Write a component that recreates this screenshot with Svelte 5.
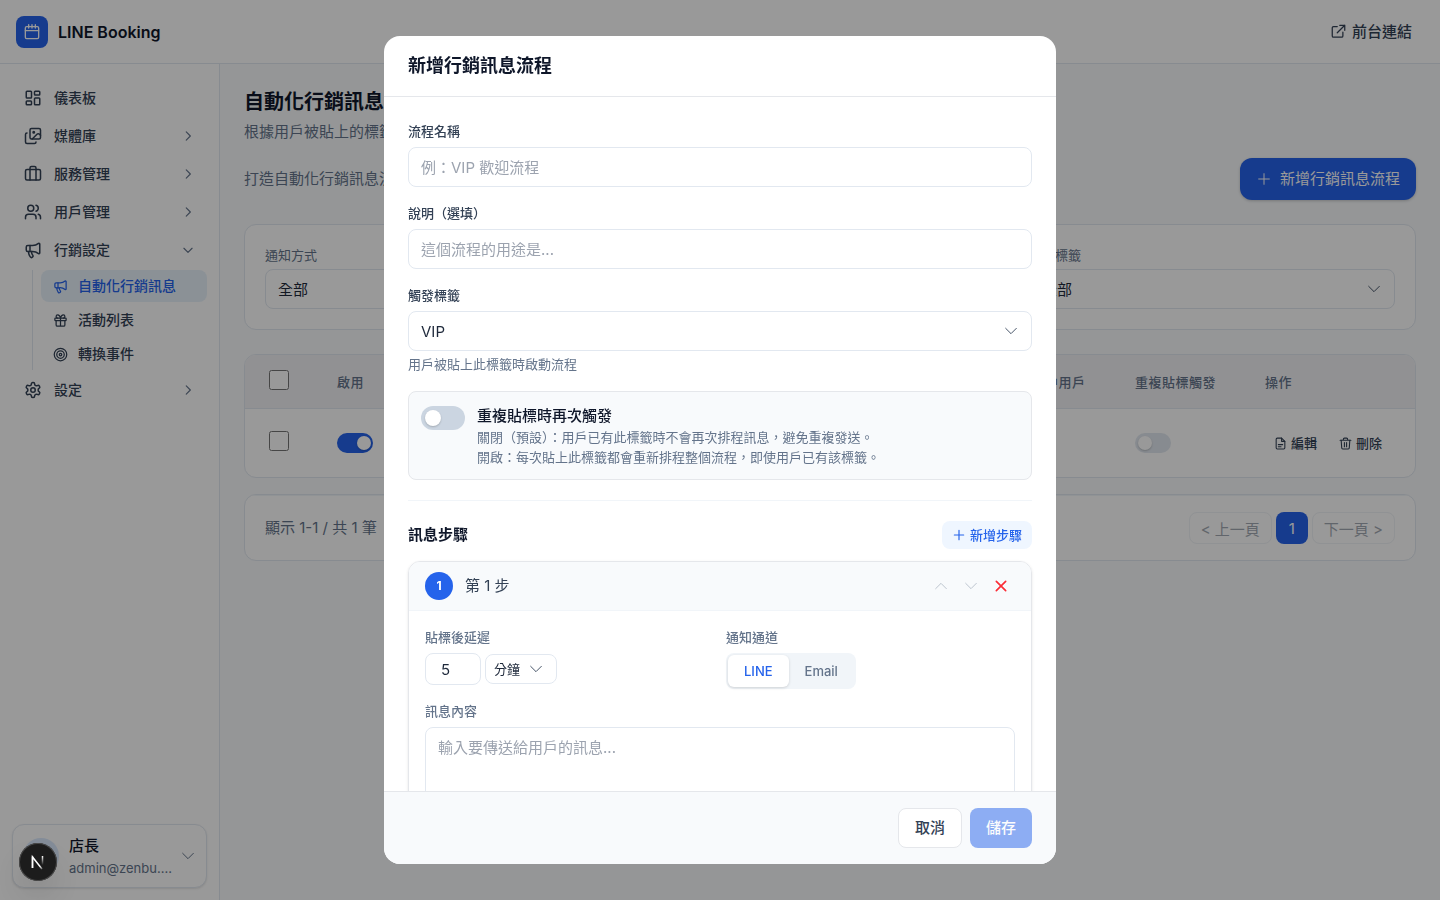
<script>
  let name = $state('');
  let description = $state('');
  let trigger = $state('VIP');
  let retrigger = $state(false);
  let delay = $state(5);
  let unit = $state('分鐘');
  let channel = $state('LINE');
  let message = $state('');
  let method = $state('全部');
  let status = $state('全部');
  let tag = $state('全部');

  const menu = [
    { text: '儀表板', icon: 'dashboard' },
    { text: '媒體庫', icon: 'images', more: true },
    { text: '服務管理', icon: 'briefcase', more: true },
    { text: '用戶管理', icon: 'users', more: true },
    {
      text: '行銷設定',
      icon: 'megaphone',
      children: [
        { text: '自動化行銷訊息', icon: 'megaphone', active: true },
        { text: '活動列表', icon: 'gift' },
        { text: '轉換事件', icon: 'target' }
      ]
    },
    { text: '設定', icon: 'settings', more: true }
  ];
</script>

{#snippet icon(type, size, stroke = 2)}
  <svg
    width={size}
    height={size}
    viewBox="0 0 24 24"
    fill="none"
    stroke="currentColor"
    stroke-width={stroke}
    stroke-linecap="round"
    stroke-linejoin="round"
    aria-hidden="true"
  >
    {#if type === 'dashboard'}
      <rect x="3" y="3" width="7" height="9" rx="1" />
      <rect x="14" y="3" width="7" height="5" rx="1" />
      <rect x="14" y="12" width="7" height="9" rx="1" />
      <rect x="3" y="16" width="7" height="5" rx="1" />
    {:else if type === 'images'}
      <path d="m22 11-1.3-1.3a2.4 2.4 0 0 0-3.4 0L11 16" />
      <path d="M4 8a2 2 0 0 0-2 2v10a2 2 0 0 0 2 2h10a2 2 0 0 0 2-2" />
      <circle cx="13" cy="7" r="1" fill="currentColor" />
      <rect x="8" y="2" width="14" height="14" rx="2" />
    {:else if type === 'briefcase'}
      <path d="M16 20V4a2 2 0 0 0-2-2h-4a2 2 0 0 0-2 2v16" />
      <rect x="2" y="6" width="20" height="14" rx="2" />
    {:else if type === 'users'}
      <path d="M16 21v-2a4 4 0 0 0-4-4H6a4 4 0 0 0-4 4v2" />
      <circle cx="9" cy="7" r="4" />
      <path d="M22 21v-2a4 4 0 0 0-3-3.87M16 3.13a4 4 0 0 1 0 7.75" />
    {:else if type === 'megaphone'}
      <path d="M11 6a13 13 0 0 0 8.4-2.8A1 1 0 0 1 21 4v12a1 1 0 0 1-1.6.8A13 13 0 0 0 11 14H5a2 2 0 0 1-2-2V8a2 2 0 0 1 2-2z" />
      <path d="M6 14a12 12 0 0 0 2.4 7.2 2 2 0 0 0 3.2-2.4A8 8 0 0 1 10 14M8 6v8" />
    {:else if type === 'gift'}
      <rect x="3" y="8" width="18" height="4" rx="1" />
      <path d="M12 8v13M19 12v7a2 2 0 0 1-2 2H7a2 2 0 0 1-2-2v-7" />
      <path d="M7.5 8a2.5 2.5 0 0 1 0-5A4.8 8 0 0 1 12 8a4.8 8 0 0 1 4.5-5 2.5 2.5 0 0 1 0 5" />
    {:else if type === 'target'}
      <circle cx="12" cy="12" r="10" />
      <circle cx="12" cy="12" r="6" />
      <circle cx="12" cy="12" r="2" />
    {:else if type === 'settings'}
      <path d="M12.22 2h-.44a2 2 0 0 0-2 2v.18a2 2 0 0 1-1 1.73l-.43.25a2 2 0 0 1-2 0l-.15-.08a2 2 0 0 0-2.73.73l-.22.38a2 2 0 0 0 .73 2.73l.15.1a2 2 0 0 1 1 1.72v.51a2 2 0 0 1-1 1.74l-.15.09a2 2 0 0 0-.73 2.73l.22.38a2 2 0 0 0 2.73.73l.15-.08a2 2 0 0 1 2 0l.43.25a2 2 0 0 1 1 1.73V20a2 2 0 0 0 2 2h.44a2 2 0 0 0 2-2v-.18a2 2 0 0 1 1-1.73l.43-.25a2 2 0 0 1 2 0l.15.08a2 2 0 0 0 2.73-.73l.22-.39a2 2 0 0 0-.73-2.73l-.15-.08a2 2 0 0 1-1-1.74v-.5a2 2 0 0 1 1-1.74l.15-.09a2 2 0 0 0 .73-2.73l-.22-.38a2 2 0 0 0-2.73-.73l-.15.08a2 2 0 0 1-2 0l-.43-.25a2 2 0 0 1-1-1.73V4a2 2 0 0 0-2-2z" />
      <circle cx="12" cy="12" r="3" />
    {:else if type === 'right'}
      <path d="m9 19 7-7-7-7" />
    {:else if type === 'down'}
      <path d="m5 9 7 7 7-7" />
    {:else if type === 'wide-down'}
      <path d="m4 8 8 8 8-8" />
    {:else if type === 'wide-up'}
      <path d="m4 16 8-8 8 8" />
    {:else if type === 'plus'}
      <path d="M12 4v16M4 12h16" />
    {:else if type === 'close'}
      <path d="M5 5l14 14M19 5 5 19" />
    {:else if type === 'calendar'}
      <rect x="2" y="4" width="20" height="18" rx="2" />
      <path d="M2 10h20M7 1v5M12 1v5M17 1v5" />
    {:else if type === 'external'}
      <path d="M14 2h8v8M22 2 10 14" />
      <path d="M19 13v6a2 2 0 0 1-2 2H4a2 2 0 0 1-2-2V6a2 2 0 0 1 2-2h6" />
    {:else if type === 'file'}
      <path d="M14 2H6a2 2 0 0 0-2 2v16a2 2 0 0 0 2 2h12a2 2 0 0 0 2-2V8z" />
      <path d="M14 2v6h6M8 14h8M8 18h5" />
    {:else if type === 'trash'}
      <path d="M2 6h20M8 6V4a2 2 0 0 1 2-2h4a2 2 0 0 1 2 2v2" />
      <path d="m4 6 1 14a2 2 0 0 0 2 2h10a2 2 0 0 0 2-2l1-14M10 10v8M14 10v8" />
    {/if}
  </svg>
{/snippet}

<div class="app">
  <header class="topbar">
    <div class="brand">
      <span class="brand-icon">{@render icon('calendar', 16)}</span>
      <span class="brand-name">LINE Booking</span>
    </div>
    <a href="#front" class="front-link">{@render icon('external', 15)}前台連結</a>
  </header>

  <div class="body">
    <aside class="sidebar">
      <nav>
        {#each menu as item (item.text)}
          <a href="#menu" class="nav-item">
            {@render icon(item.icon, 18)}
            <span class="nav-text">{item.text}</span>
            {#if item.children}
              <span class="arrow">{@render icon('down', 14)}</span>
            {:else if item.more}
              <span class="arrow">{@render icon('right', 14)}</span>
            {/if}
          </a>
          {#if item.children}
            <div class="submenu">
              {#each item.children as child (child.text)}
                <a href="#submenu" class="sub-item" class:active={child.active}>
                  {@render icon(child.icon, 15)}
                  {child.text}
                </a>
              {/each}
            </div>
          {/if}
        {/each}
      </nav>
      <button class="user-card">
        <span class="avatar"></span>
        <span class="user-info">
          <span class="user-name">店長</span>
          <span class="user-email">admin@zenbu....</span>
        </span>
        {@render icon('wide-down', 16, 1.5)}
      </button>
    </aside>

    <main class="content">
      <h1>自動化行銷訊息</h1>
      <p class="subtitle">根據用戶被貼上的標籤自動發送訊息</p>

      <div class="intro">
        <p>打造自動化行銷訊息流程，自動與用戶互動</p>
        <button class="primary-button">{@render icon('plus', 16, 1.5)}新增行銷訊息流程</button>
      </div>

      <section class="card filters">
        <div class="filter">
          <label for="method">通知方式</label>
          <div class="select">
            <select id="method" bind:value={method}><option>全部</option></select>
            {@render icon('wide-down', 16, 1.5)}
          </div>
        </div>
        <div class="filter">
          <label for="status">狀態</label>
          <div class="select">
            <select id="status" bind:value={status}><option>全部</option></select>
            {@render icon('wide-down', 16, 1.5)}
          </div>
        </div>
        <div class="filter">
          <label for="tag">觸發標籤</label>
          <div class="select">
            <select id="tag" bind:value={tag}><option>全部</option></select>
            {@render icon('wide-down', 16, 1.5)}
          </div>
        </div>
      </section>

      <section class="card table-card">
        <table>
          <thead>
            <tr>
              <th class="col-check"><input type="checkbox" aria-label="全選" /></th>
              <th class="col-on">啟用</th>
              <th>流程名稱</th>
              <th class="col-users">進行中用戶</th>
              <th class="col-repeat">重複貼標觸發</th>
              <th class="col-actions">操作</th>
            </tr>
          </thead>
          <tbody>
            <tr>
              <td><input type="checkbox" aria-label="選取" /></td>
              <td><button class="switch small on" role="switch" aria-checked="true" aria-label="啟用"></button></td>
              <td>VIP</td>
              <td>0</td>
              <td><button class="switch small" role="switch" aria-checked="false" aria-label="重複貼標觸發"></button></td>
              <td>
                <div class="row-actions">
                  <button>{@render icon('file', 13)}編輯</button>
                  <button>{@render icon('trash', 13)}刪除</button>
                </div>
              </td>
            </tr>
          </tbody>
        </table>
      </section>

      <section class="card pager-card">
        <div class="pager">
          <span>顯示 1-1 / 共 1 筆</span>
          <div class="pages">
            <button class="page" disabled>&lt; 上一頁</button>
            <button class="page current">1</button>
            <button class="page" disabled>下一頁 &gt;</button>
          </div>
        </div>
      </section>
    </main>
  </div>
</div>

<div class="overlay">
  <div class="modal" role="dialog" aria-modal="true" aria-labelledby="modal-title">
    <header class="modal-header">
      <h2 id="modal-title">新增行銷訊息流程</h2>
    </header>

    <div class="modal-body">
      <div class="field">
        <label for="name">流程名稱</label>
        <input id="name" type="text" placeholder="例：VIP 歡迎流程" bind:value={name} />
      </div>
      <div class="field">
        <label for="description">說明（選填）</label>
        <input id="description" type="text" placeholder="這個流程的用途是..." bind:value={description} />
      </div>
      <div class="field">
        <label for="trigger">觸發標籤</label>
        <div class="select">
          <select id="trigger" bind:value={trigger}><option>VIP</option></select>
          {@render icon('wide-down', 16, 1.5)}
        </div>
        <p class="hint">用戶被貼上此標籤時啟動流程</p>
      </div>

      <div class="retrigger">
        <button
          class="switch"
          class:on={retrigger}
          role="switch"
          aria-checked={retrigger}
          aria-labelledby="retrigger-label"
          onclick={() => (retrigger = !retrigger)}
        ></button>
        <div>
          <p class="retrigger-title" id="retrigger-label">重複貼標時再次觸發</p>
          <p class="retrigger-text">
            關閉（預設）：用戶已有此標籤時不會再次排程訊息，避免重複發送。<br />
            開啟：每次貼上此標籤都會重新排程整個流程，即使用戶已有該標籤。
          </p>
        </div>
      </div>

      <section class="steps">
        <div class="steps-head">
          <h3>訊息步驟</h3>
          <button class="add-step">{@render icon('plus', 14)}新增步驟</button>
        </div>

        <div class="step">
          <div class="step-head">
            <span class="step-number">1</span>
            <span class="step-title">第 1 步</span>
            <div class="step-actions">
              <button disabled aria-label="上移">{@render icon('wide-up', 16, 1.5)}</button>
              <button disabled aria-label="下移">{@render icon('wide-down', 16, 1.5)}</button>
              <button class="remove" aria-label="移除">{@render icon('close', 16, 2.5)}</button>
            </div>
          </div>
          <div class="step-body">
            <div class="step-grid">
              <div class="step-field">
                <label for="delay">貼標後延遲</label>
                <div class="delay">
                  <input id="delay" type="number" min="0" bind:value={delay} />
                  <div class="select unit">
                    <select aria-label="單位" bind:value={unit}>
                      <option>分鐘</option>
                      <option>小時</option>
                      <option>天</option>
                    </select>
                    {@render icon('wide-down', 16, 1.5)}
                  </div>
                </div>
              </div>
              <div class="step-field">
                <span class="label" id="channel-label">通知通道</span>
                <div class="segmented" role="group" aria-labelledby="channel-label">
                  {#each ['LINE', 'Email'] as option (option)}
                    <button class:selected={channel === option} onclick={() => (channel = option)}>{option}</button>
                  {/each}
                </div>
              </div>
            </div>
            <div class="step-field">
              <label for="message">訊息內容</label>
              <textarea id="message" rows="4" placeholder="輸入要傳送給用戶的訊息..." bind:value={message}></textarea>
            </div>
          </div>
        </div>
      </section>
    </div>

    <footer class="modal-footer">
      <button class="cancel">取消</button>
      <button class="save" disabled>儲存</button>
    </footer>
  </div>
</div>

<button class="dev-badge" aria-label="開發工具">
  <svg width="38" height="38" viewBox="0 0 38 38" fill="none" aria-hidden="true">
    <defs>
      <linearGradient id="n-diagonal" x1="18" y1="18" x2="25" y2="27" gradientUnits="userSpaceOnUse">
        <stop offset="0.5" stop-color="#fff" />
        <stop offset="1" stop-color="#fff" stop-opacity="0" />
      </linearGradient>
      <linearGradient id="n-stem" x1="24" y1="13" x2="24" y2="22" gradientUnits="userSpaceOnUse">
        <stop stop-color="#fff" />
        <stop offset="1" stop-color="#fff" stop-opacity="0" />
      </linearGradient>
    </defs>
    <path d="M13.5 25V14l9.5 12" stroke="url(#n-diagonal)" stroke-width="1.5" />
    <path d="M13.5 25V13.5" stroke="#fff" stroke-width="1.5" />
    <path d="M23.5 13v9" stroke="url(#n-stem)" stroke-width="1.5" />
  </svg>
</button>

<style>
  :global(body) {
    background: #f8fafc;
  }

  .app,
  .overlay,
  .app button,
  .overlay button,
  input,
  select,
  textarea {
    font-family: Inter, 'Noto Sans CJK TC', sans-serif;
    font-size: 15px;
  }

  .app,
  .overlay {
    line-height: 24px;
    color: #0f172a;
  }

  .app *,
  .overlay * {
    box-sizing: border-box;
  }

  h1,
  h2,
  h3,
  p {
    margin: 0;
  }

  button {
    border: none;
    background: none;
    padding: 0;
    cursor: pointer;
  }

  a {
    text-decoration: none;
  }

  svg {
    flex-shrink: 0;
  }

  .app {
    display: flex;
    flex-direction: column;
    height: 100vh;
  }

  .topbar {
    display: flex;
    align-items: center;
    justify-content: space-between;
    height: 64px;
    flex-shrink: 0;
    padding: 0 28px 0 16px;
    background: white;
    border-bottom: 1px solid #e2e8f0;
  }

  .brand {
    display: flex;
    align-items: center;
    gap: 10px;
  }

  .brand-icon {
    display: flex;
    align-items: center;
    justify-content: center;
    width: 32px;
    height: 32px;
    border-radius: 8px;
    background: #2563eb;
    color: white;
  }

  .brand-name {
    font-size: 16px;
    font-weight: 600;
  }

  .front-link {
    display: flex;
    align-items: center;
    gap: 6px;
    color: #334155;
    font-weight: 500;
  }

  .body {
    display: flex;
    flex: 1;
    min-height: 0;
  }

  .sidebar {
    display: flex;
    flex-direction: column;
    justify-content: space-between;
    width: 220px;
    flex-shrink: 0;
    padding: 16px 12px 12px;
    background: white;
    border-right: 1px solid #e2e8f0;
  }

  nav {
    display: flex;
    flex-direction: column;
    gap: 2px;
  }

  .nav-item,
  .sub-item {
    display: flex;
    align-items: center;
    border-radius: 8px;
    font-size: 14px;
    line-height: 20px;
    font-weight: 500;
    color: #334155;
    padding: 0 12px;
  }

  .nav-item {
    height: 36px;
    gap: 12px;
  }

  .nav-text {
    flex: 1;
  }

  .arrow {
    display: flex;
    color: #64748b;
  }

  .submenu {
    display: flex;
    flex-direction: column;
    gap: 2px;
    margin-left: 20px;
    padding-left: 8px;
    border-left: 1px solid #e2e8f0;
  }

  .sub-item {
    height: 32px;
    gap: 10px;
  }

  .sub-item.active {
    background: #e8f2fb;
    color: #2563eb;
  }

  .user-card {
    display: flex;
    align-items: center;
    gap: 10px;
    height: 64px;
    padding: 0 10px;
    border: 1px solid #e2e8f0;
    border-radius: 12px;
    background: white;
    box-shadow: 0 1px 2px rgba(0, 0, 0, 0.1);
    text-align: left;
    color: #64748b;
  }

  .avatar {
    width: 36px;
    height: 36px;
    flex-shrink: 0;
    border-radius: 50%;
    background: #dbeafe;
  }

  .user-info {
    display: flex;
    flex-direction: column;
    flex: 1;
    min-width: 0;
  }

  .user-name {
    font-weight: 500;
    line-height: 24px;
    color: #0f172a;
  }

  .user-email {
    font-size: 13px;
    line-height: 20px;
    white-space: nowrap;
  }

  .content {
    flex: 1;
    min-width: 0;
    padding: 24px;
  }

  h1 {
    font-size: 20px;
    line-height: 28px;
    font-weight: 700;
  }

  .subtitle,
  .intro p {
    color: #64748b;
  }

  .subtitle {
    margin-top: 4px;
  }

  .intro {
    display: flex;
    align-items: center;
    justify-content: space-between;
    margin: 14px 0 24px;
  }

  .primary-button {
    display: flex;
    align-items: center;
    gap: 8px;
    height: 42px;
    padding: 0 16px;
    border-radius: 12px;
    background: #2563eb;
    color: white;
    line-height: 20px;
    box-shadow: 0 1px 3px rgba(0, 0, 0, 0.2);
  }

  .card {
    background: white;
    border: 1px solid #e2e8f0;
    border-radius: 12px;
  }

  .filters {
    display: grid;
    grid-template-columns: repeat(3, 1fr);
    gap: 16px;
    padding: 20px;
  }

  .filter {
    display: flex;
    flex-direction: column;
    gap: 4px;
  }

  .filter label {
    font-size: 13px;
    line-height: 20px;
    color: #64748b;
  }

  .select {
    position: relative;
    display: flex;
  }

  .select :global(svg) {
    position: absolute;
    right: 13px;
    top: 0;
    bottom: 0;
    margin: auto 0;
    color: #475569;
    pointer-events: none;
  }

  select,
  input[type='text'],
  input[type='number'],
  textarea {
    border: 1px solid #e2e8f0;
    border-radius: 8px;
    background: white;
    color: #1e293b;
    outline: none;
  }

  select {
    appearance: none;
  }

  select,
  input[type='text'] {
    width: 100%;
    height: 40px;
    padding: 0 12px;
  }

  input::placeholder,
  textarea::placeholder {
    color: #9ca3af;
  }

  .table-card {
    margin-top: 24px;
    overflow: hidden;
  }

  table {
    width: 100%;
    border-collapse: separate;
    border-spacing: 0;
    table-layout: fixed;
  }

  th {
    height: 54px;
    padding: 0 24px;
    background: #f2f2f6;
    border-bottom: 1px solid #e2e8f0;
    text-align: left;
    font-size: 13px;
    font-weight: 500;
    letter-spacing: 0.5px;
    color: #64748b;
    white-space: nowrap;
  }

  td {
    height: 68px;
    padding: 0 24px;
  }

  .col-check {
    width: 68px;
  }

  .col-on {
    width: 75px;
  }

  .col-users {
    width: 117px;
  }

  .col-repeat {
    width: 130px;
  }

  .col-actions {
    width: 174px;
  }

  input[type='checkbox'] {
    display: block;
    width: 20px;
    height: 20px;
    margin: 0 0 4px;
  }

  .switch {
    display: flex;
    align-items: center;
    flex-shrink: 0;
    width: 44px;
    height: 24px;
    padding: 0 4px;
    border-radius: 12px;
    background: #cbd5e1;
  }

  .switch::before {
    content: '';
    width: 16px;
    height: 16px;
    border-radius: 50%;
    background: white;
    box-shadow: 0 1px 2px rgba(0, 0, 0, 0.2);
  }

  .switch.small {
    width: 36px;
    height: 20px;
    padding: 0 3px;
    background: #e2e8f0;
  }

  .switch.small::before {
    width: 14px;
    height: 14px;
  }

  .switch.on,
  .switch.small.on {
    justify-content: flex-end;
    padding: 0 2px;
    background: #2563eb;
  }

  .row-actions {
    display: flex;
    gap: 4px;
  }

  .row-actions button {
    display: flex;
    align-items: center;
    gap: 4px;
    height: 28px;
    padding: 0 9px;
    font-size: 13px;
    line-height: 20px;
    font-weight: 500;
    color: #334155;
    white-space: nowrap;
  }

  .pager-card {
    margin-top: 16px;
    overflow: hidden;
  }

  .pager {
    display: flex;
    align-items: center;
    justify-content: space-between;
    padding: 16px 20px;
    border-top: 1px solid #f1f5f9;
    color: #64748b;
  }

  .pages {
    display: flex;
    gap: 4px;
  }

  .page {
    min-width: 32px;
    height: 32px;
    padding: 0 11px;
    border: 1px solid #e2e8f0;
    border-radius: 8px;
    color: #475569;
  }

  .page:disabled {
    opacity: 0.5;
  }

  .page.current {
    padding: 0;
    border: none;
    background: #2563eb;
    color: white;
  }

  .overlay {
    position: fixed;
    inset: 0;
    display: flex;
    align-items: center;
    justify-content: center;
    background: rgba(0, 0, 0, 0.4);
  }

  .modal {
    display: flex;
    flex-direction: column;
    width: 100%;
    max-width: 672px;
    max-height: 92vh;
    border-radius: 16px;
    background: white;
    overflow: hidden;
  }

  .modal-header {
    flex-shrink: 0;
    padding: 16px 24px;
    border-bottom: 1px solid #e5e7eb;
  }

  h2 {
    font-size: 18px;
    line-height: 28px;
    font-weight: 700;
  }

  .modal-body {
    display: flex;
    flex-direction: column;
    gap: 16px;
    flex: 1;
    min-height: 0;
    padding: 24px;
    overflow-y: auto;
    scrollbar-width: none;
  }

  .field label {
    display: block;
    margin-bottom: 6px;
    font-size: 13px;
    line-height: 20px;
    font-weight: 500;
    color: #334155;
  }

  .hint {
    margin: 4px 0 2px;
    font-size: 13px;
    line-height: 18px;
    color: #64748b;
  }

  .retrigger {
    display: flex;
    align-items: flex-start;
    gap: 12px;
    padding: 12px;
    border: 1px solid #e5e7eb;
    border-radius: 8px;
    background: #f8fafc;
  }

  .retrigger .switch {
    margin-top: 2px;
  }

  .retrigger-title {
    font-weight: 500;
  }

  .retrigger-text {
    font-size: 13px;
    line-height: 1.5;
    color: #64748b;
  }

  .steps {
    margin-top: 4px;
    padding-top: 20px;
    border-top: 1px solid #f1f5f9;
  }

  .steps-head {
    display: flex;
    align-items: center;
    justify-content: space-between;
    margin-bottom: 12px;
  }

  h3 {
    font-size: 15px;
    font-weight: 700;
  }

  .overlay .add-step {
    display: flex;
    align-items: center;
    gap: 4px;
    height: 28px;
    padding: 0 10px;
    border-radius: 8px;
    background: #eff6ff;
    color: #2563eb;
    font-size: 13px;
    line-height: 18px;
    font-weight: 500;
  }

  .step {
    border: 1px solid #e5e7eb;
    border-radius: 12px;
    overflow: hidden;
    box-shadow: 0 1px 3px rgba(0, 0, 0, 0.1);
  }

  .step-head {
    display: flex;
    align-items: center;
    gap: 12px;
    padding: 10px 16px;
    border-bottom: 1px solid #f1f5f9;
    background: #f8fafc;
  }

  .step-number {
    display: flex;
    align-items: center;
    justify-content: center;
    width: 28px;
    height: 28px;
    border-radius: 50%;
    background: #2563eb;
    color: white;
    font-size: 12px;
    font-weight: 700;
  }

  .step-title {
    flex: 1;
    color: #334155;
  }

  .step-actions {
    display: flex;
    gap: 2px;
  }

  .step-actions button {
    display: flex;
    align-items: center;
    justify-content: center;
    width: 28px;
    height: 28px;
    color: #64748b;
  }

  .step-actions button:disabled {
    opacity: 0.4;
  }

  .step-actions .remove {
    color: #fb2c36;
  }

  .step-body {
    display: flex;
    flex-direction: column;
    gap: 12px;
    padding: 16px;
  }

  .step-grid {
    display: grid;
    grid-template-columns: 1fr 1fr;
    gap: 12px;
  }

  .step-field {
    display: flex;
    flex-direction: column;
    align-items: flex-start;
    gap: 6px;
  }

  .step-field label,
  .label {
    font-size: 13px;
    line-height: 20px;
    font-weight: 500;
    color: #64748b;
  }

  .delay {
    display: flex;
    align-items: center;
    gap: 4px;
  }

  input[type='number'] {
    width: 56px;
    height: 32px;
    padding: 0 8px;
    text-align: center;
  }

  .unit select {
    width: 72px;
    height: 30px;
    padding: 0 8px;
    font-size: 13px;
  }

  .segmented {
    display: flex;
    padding: 2px;
    border-radius: 8px;
    background: #f1f5f9;
  }

  .overlay .segmented button {
    height: 32px;
    padding: 0 16px;
    border-radius: 6px;
    color: #64748b;
    font-size: 13px;
    font-weight: 500;
  }

  .overlay .segmented .selected {
    background: white;
    color: #2563eb;
    box-shadow: 0 1px 3px rgba(0, 0, 0, 0.15);
  }

  textarea {
    width: 100%;
    padding: 8px 12px;
    line-height: 24px;
    resize: none;
  }

  .modal-footer {
    display: flex;
    justify-content: flex-end;
    flex-shrink: 0;
    gap: 8px;
    padding: 16px 24px;
    border-top: 1px solid #e5e7eb;
    background: #f8fafc;
  }

  .modal-footer button {
    height: 40px;
    padding: 0 16px;
    border-radius: 8px;
    line-height: 20px;
    font-weight: 500;
  }

  .modal-footer .cancel {
    border: 1px solid #e5e7eb;
    background: white;
    color: #334155;
  }

  .modal-footer .save {
    background: #2563eb;
    color: white;
    opacity: 0.5;
  }

  .dev-badge {
    position: fixed;
    left: 19px;
    bottom: 19px;
    width: 38px;
    height: 38px;
    border-radius: 50%;
    background: #1c1c1c;
    box-shadow: inset 0 0 0 1px #4a4a4a, 0 16px 32px -8px rgba(0, 0, 0, 0.24);
  }
</style>
